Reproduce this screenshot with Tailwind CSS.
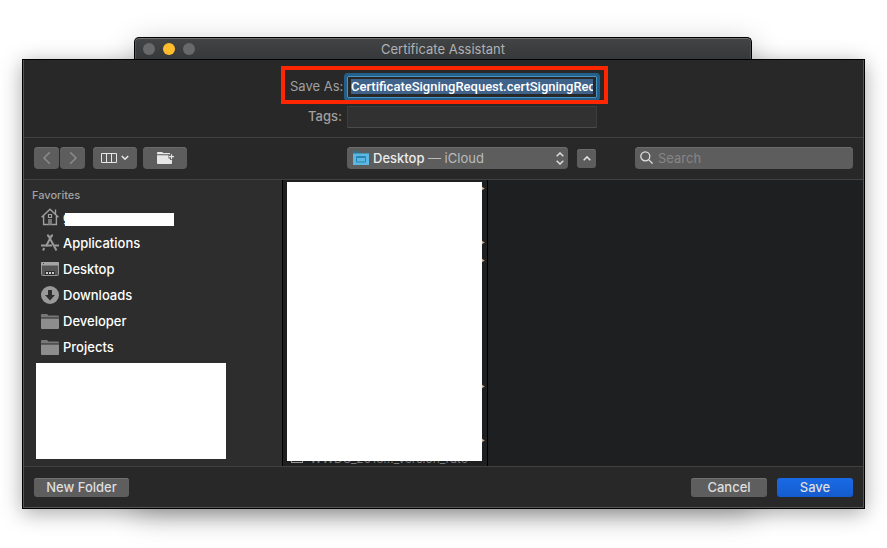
<!DOCTYPE html>
<html lang="en">
<head>
<meta charset="utf-8">
<meta name="viewport" content="width=device-width, initial-scale=1">
<title>Certificate Assistant</title>
<script src="https://cdn.jsdelivr.net/npm/@tailwindcss/browser@4"></script>
</head>
<body class="bg-white font-['Inter','Liberation_Sans',sans-serif] text-[13px] leading-4 text-[#dedede]">
<main class="relative isolate px-[22px] pt-[37px] pb-10">
  <div class="absolute inset-x-[135px] top-[38px] bottom-10 -z-10 rounded-t-md shadow-[0_6px_30px_rgba(0,0,0,0.25)]"></div>
  <header class="relative mr-[113px] ml-[112px] flex h-[22px] items-center justify-center rounded-t-[5px] border border-b-0 border-black bg-linear-to-b from-[#424445] to-[#363839] shadow-[inset_0_1px_0_#707273,inset_1px_0_0_#505253,inset_-1px_0_0_#505253]">
    <div class="absolute left-2 flex gap-2">
      <button type="button" aria-label="Close" class="size-3 rounded-full bg-[#67696a]"></button>
      <button type="button" aria-label="Minimize" class="size-3 rounded-full bg-[#ffbd2e]"></button>
      <button type="button" aria-label="Zoom" class="size-3 rounded-full bg-[#67696a]"></button>
    </div>
    <h1 class="pt-px text-[#b0b1b2]">Certificate Assistant</h1>
  </header>

  <form class="border border-black bg-[#282828] shadow-[0_4px_20px_rgba(0,0,0,0.35)]">
   <div class="border-x border-b border-[#555555]">
    <div class="flex h-[78px] flex-col items-center gap-2 border-b border-[#414141] pt-4">
      <div class="relative grid grid-cols-[52px_250px] items-center gap-[5px]">
        <label for="name" class="pb-[2px] text-right text-[#a0a0a0] whitespace-nowrap">Save As:</label>
        <input id="name" type="text" value="CertificateSigningRequest.certSigningRequest" class="h-[22px] rounded-[1px] border border-[#4c93c5] bg-[#282828] px-[3px] pb-[2px] font-['Roboto','Liberation_Sans',sans-serif] font-medium text-white outline-3 outline-[#22608a] selection:bg-[#3f638b] selection:text-white">
        <div class="pointer-events-none absolute -top-[10px] -right-[11px] -bottom-[6px] -left-[9px] border-4 border-[#ff2600]"></div>
      </div>
      <div class="grid grid-cols-[52px_250px] items-center gap-[5px]">
        <label for="tags" class="pb-[2px] text-right font-medium text-[#a0a0a0]">Tags:</label>
        <input id="tags" type="text" class="h-[22px] border border-[#3c3c3c] border-b-[#4c4c4c] bg-[#313131] px-1 outline-none">
      </div>
    </div>

    <div class="flex h-[42px] items-center border-b border-[#414141] px-[10px] pb-px">
      <div class="flex w-[313px] shrink-0">
        <button type="button" aria-label="Back" class="flex h-[22px] w-[25px] items-center justify-center rounded bg-[#5d5d5d] inset-shadow-[0_1px_0_#6b6b6b]">
          <svg class="size-[14px]" viewBox="0 0 14 14" fill="none" stroke="#8b8b8b" stroke-width="1.5"><path d="M9.8 1.200 4 7l5.800 5.800"/></svg>
        </button>
        <button type="button" aria-label="Forward" class="ml-px flex h-[22px] w-[25px] items-center justify-center rounded bg-[#5d5d5d] inset-shadow-[0_1px_0_#6b6b6b]">
          <svg class="size-[14px]" viewBox="0 0 14 14" fill="none" stroke="#8b8b8b" stroke-width="1.5"><path d="M4.200 1.200 10 7l-5.800 5.800"/></svg>
        </button>
        <button type="button" aria-label="View as columns" class="ml-2 flex h-[22px] w-11 items-center justify-center gap-1 rounded bg-[#5d5d5d] inset-shadow-[0_1px_0_#6b6b6b]">
          <svg class="h-[10px] w-4" viewBox="0 0 16 10" fill="none" stroke="#e6e6e6"><path d="M.5.5h15v9H.5zM5.500.5v9M10.500.5v9"/></svg>
          <svg class="h-[6px] w-2" viewBox="0 0 8 6" fill="none" stroke="#e6e6e6" stroke-width="1.6"><path d="m.8 1 3.200 3.200L7.200 1"/></svg>
        </button>
        <button type="button" aria-label="Group items" class="ml-[6px] flex h-[22px] w-11 items-center justify-center rounded bg-[#5d5d5d] pb-px inset-shadow-[0_1px_0_#6b6b6b]">
          <svg class="h-3 w-[17px]" viewBox="0 0 17 12"><path d="M0 2.200V.8Q0 0 .8 0h4.400l1 1H13v1.200z" fill="#e6e6e6"/><path d="M0 3.200h11.500v3.200H13V8h2v3.200q0 .8-.8.8H.8Q0 12 0 11.200z" fill="#e6e6e6"/><path d="M14.500 2.200v5M12 4.700h5" stroke="#e6e6e6" stroke-width="1.200"/></svg>
        </button>
      </div>
      <div class="relative flex h-[22px] w-[221px] shrink-0 items-center rounded bg-[#5d5d5d] pr-1 pl-[6px] inset-shadow-[0_1px_0_#6b6b6b]">
        <svg class="mr-1 h-[14px] w-4 shrink-0" viewBox="0 0 16 14"><path d="M0 1Q0 0 1 0h4l2 2h9v12H0z" fill="#2d7391"/><path d="M0 2.500h16V14H0z" fill="#5cb8e2"/><path d="M3.500 5.500h9v5.500h-9zM3 6.500h10" fill="none" stroke="#2585b4"/></svg>
        <span class="font-medium text-[#ececec]" aria-hidden="true">Desktop <span class="font-normal text-[#bcbcbc]">— iCloud</span></span>
        <svg class="ml-auto h-[13px] w-2 shrink-0" viewBox="0 0 8 13" fill="none" stroke="#dedede" stroke-width="1.500"><path d="M.7 4.300 4 1l3.300 3.300M.7 8.700 4 12l3.300-3.300"/></svg>
        <select aria-label="Location" class="absolute inset-0 size-full opacity-0"><option>Desktop — iCloud</option></select>
      </div>
      <button type="button" aria-label="Collapse" class="ml-[9px] flex h-[19px] w-[19px] shrink-0 items-center justify-center rounded-[3px] bg-[#5d5d5d] inset-shadow-[0_1px_0_#6b6b6b]">
        <svg class="h-[5px] w-2" viewBox="0 0 8 5" fill="none" stroke="#e6e6e6" stroke-width="1.500"><path d="M.7 4.200 4 .9l3.300 3.300"/></svg>
      </button>
      <div class="relative ml-[39px] min-w-0 flex-1">
        <svg class="absolute top-1 left-[5px] size-[13px]" viewBox="0 0 13 13" fill="none" stroke="#dedede" stroke-width="1.300"><circle cx="5.300" cy="5.300" r="4.500"/><path d="m8.600 8.600 4 4"/></svg>
        <input type="search" aria-label="Search" placeholder="Search" class="block h-[22px] w-full rounded bg-[#5d5d5d] pl-[23px] outline-none inset-shadow-[0_1px_0_#6b6b6b] placeholder:text-[#868686]">
      </div>
    </div>

    <div class="flex h-[287px] border-b border-[#414141] bg-[#1d1f21]">
      <nav class="w-[259px] shrink-0 border-r border-black bg-[#2d2d2d] pt-[7px] font-medium text-white" aria-label="Favorites">
        <h2 class="mb-px pl-2 text-[11px] text-[#a3a3a3]">Favorites</h2>
        <ul>
          <li class="relative"><a href="#" class="flex h-[26px] items-center gap-1 pl-[17px]">
            <svg class="size-[18px] shrink-0" viewBox="0 0 18 18" fill="none" stroke="#a0a0a0" stroke-width="1.400"><path d="M.6 9.200 9 1.200 17.400 9.200M2.600 8v8.500h12.800V8M14.500 6V1.600"/><path d="M7.500 6.500h3v3h-3z" stroke-width="1.200"/><path d="M7 11h4v5.500H7z" fill="#777" stroke="none"/></svg>
            <span>g</span></a>
            <div class="absolute top-[9px] left-[41px] h-[13px] w-[109px] bg-white"></div>
          </li>
          <li><a href="#" class="flex h-[26px] items-center gap-1 pl-[17px]">
            <svg class="size-[18px] shrink-0" viewBox="0 0 18 18" fill="none" stroke="#999" stroke-width="2"><path d="M6 1.500h1.300L15.500 16.500M12 1.500h-1.300L5 12.300M3.200 14 2 16.500"/><path d="M0 11.500h11M13.500 11.500H18"/></svg>
            Applications</a></li>
          <li><a href="#" class="flex h-[26px] items-center gap-1 pl-[17px]">
            <svg class="h-[14px] w-[18px] shrink-0" viewBox="0 0 18 14"><rect x=".5" y=".5" width="17" height="13" rx="1" fill="#555" stroke="#999"/><path d="M0 3.500V1q0-1 1-1h16q1 0 1 1v2.500z" fill="#a4a4a4"/><path d="M4 9h10v4H4z" fill="#2d2d2d"/><path d="M5 10h2v2H5zM8 10h2v2H8zM11 10h2v2h-2z" fill="#ccc"/><path d="M2 1h1v1H2z" fill="#444"/></svg>
            Desktop</a></li>
          <li><a href="#" class="flex h-[26px] items-center gap-1 pl-[17px]">
            <svg class="size-[18px] shrink-0" viewBox="0 0 18 18"><circle cx="9" cy="9" r="9" fill="#999"/><path d="M7 4h4v5h3l-5 5.500L4 9h3z" fill="#2d2d2d"/></svg>
            Downloads</a></li>
          <li><a href="#" class="flex h-[26px] items-center gap-1 pl-[17px]">
            <svg class="h-[15px] w-[18px] shrink-0" viewBox="0 0 18 15"><path d="M0 3.500V1q0-1 1-1h5l1.500 1.500H17q1 0 1 1v1z" fill="#777"/><path d="M0 4.500h18V14q0 1-1 1H1q-1 0-1-1z" fill="#8d8d8d"/></svg>
            Developer</a></li>
          <li><a href="#" class="flex h-[26px] items-center gap-1 pl-[17px]">
            <svg class="h-[15px] w-[18px] shrink-0" viewBox="0 0 18 15"><path d="M0 3.500V1q0-1 1-1h5l1.500 1.500H17q1 0 1 1v1z" fill="#777"/><path d="M0 4.500h18V14q0 1-1 1H1q-1 0-1-1z" fill="#8d8d8d"/></svg>
            Projects</a></li>
        </ul>
        <div class="mt-[3px] ml-3 h-24 w-[190px] bg-white"></div>
      </nav>
      <div class="relative w-[205px] shrink-0 overflow-hidden border-r border-black">
        <ul class="grid auto-rows-[18px] pr-[2px] text-right text-[8px] leading-4 text-[#b0b0b0]">
          <li>▶</li><li></li><li></li><li>▶</li><li>▶</li><li></li><li></li><li></li><li></li><li></li><li></li><li>▶</li><li></li><li></li><li>▶</li>
          <li class="flex items-center pl-2 text-[12px] text-[#77797a]"><span class="mr-[7px] mb-1 h-3 w-3 border border-[#999]"></span>WWDC_2018..._version_rate</li>
        </ul>
        <div class="absolute top-[2px] left-1 h-[279px] w-[195px] bg-white"></div>
      </div>
      <div class="flex-1"></div>
    </div>

    <footer class="flex h-10 items-start gap-[10px] px-[10px] pt-[11px] font-medium">
      <button type="button" class="h-[19px] w-[95px] rounded-[3px] bg-[#5e5e5e] pb-px inset-shadow-[0_1px_0_#727272]">New Folder</button>
      <button type="button" class="ml-auto h-[19px] w-[76px] rounded-[3px] bg-[#5e5e5e] pb-px inset-shadow-[0_1px_0_#727272]">Cancel</button>
      <button type="submit" class="h-[19px] w-[76px] rounded-[3px] bg-linear-to-b from-[#1a6ae6] to-[#145ccd] pb-px">Save</button>
    </footer>
   </div>
  </form>
</main>
<script>
  document.getElementById('name').focus();
  document.getElementById('name').select();
</script>
</body>
</html>
